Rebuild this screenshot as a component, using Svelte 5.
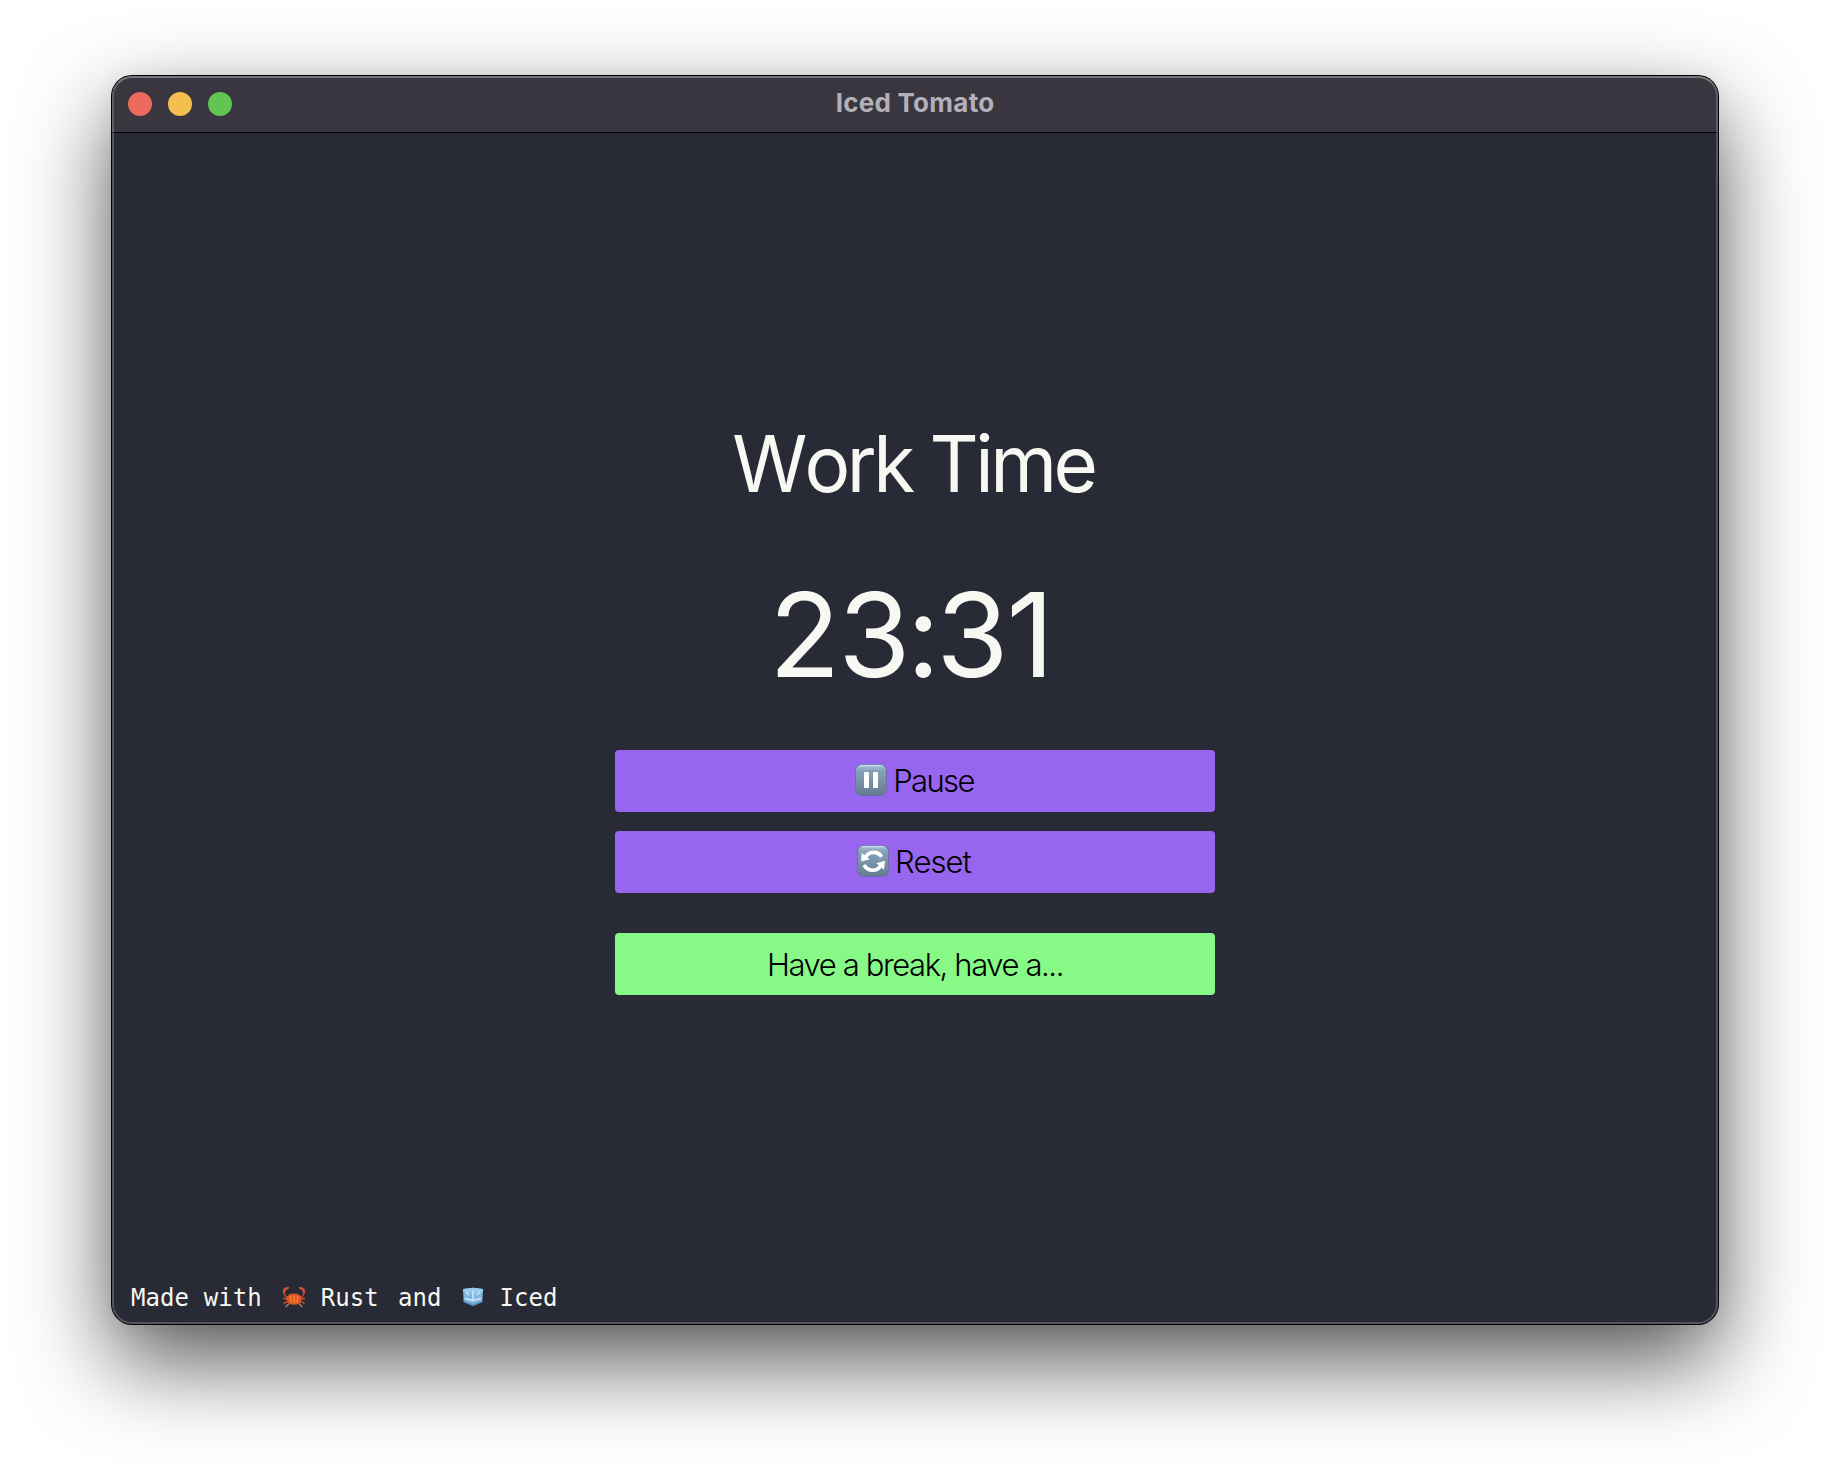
<script>
  const lights = ['red', 'yellow', 'green'];
</script>

<main>
  <section class="window">
    <header>
      <div class="lights">
        {#each lights as light}<span class="light {light}"></span>{/each}
      </div>
      <h1><span>Iced Tomato</span></h1>
    </header>
    <div class="content">
      <div class="mode"><span class="initial">W</span>ork Time</div>
      <div class="timer">23<span class="colon">:</span>31</div>
      <div class="actions">
        <button>
          <svg class="emoji" viewBox="0 0 32 32">
            <defs>
              <linearGradient id="tile" x1="0" y1="0" x2="0" y2="1">
                <stop offset="0" stop-color="#a9c3d9" />
                <stop offset="0.2" stop-color="#86a2ba" />
                <stop offset="1" stop-color="#657d93" />
              </linearGradient>
            </defs>
            <rect x="0.3" y="0.3" width="31.4" height="31.4" rx="6" fill="#5e738a" />
            <rect x="1" y="0.8" width="30" height="30" rx="5.5" fill="url(#tile)" />
            <path d="M5 1.6H27" stroke="#c6dcec" stroke-width="1.2" stroke-linecap="round" />
            <rect x="9" y="8" width="5" height="16" rx="1" fill="#fff" />
            <rect x="18" y="8" width="5" height="16" rx="1" fill="#fff" />
          </svg>
          <span class="pause">Pause</span>
        </button>
        <button>
          <svg class="emoji" viewBox="0 0 32 32">
            <rect x="0.3" y="0.3" width="31.4" height="31.4" rx="6" fill="#5e738a" />
            <rect x="1" y="0.8" width="30" height="30" rx="5.5" fill="url(#tile)" />
            <path d="M5 1.6H27" stroke="#c6dcec" stroke-width="1.2" stroke-linecap="round" />
            <path d="M8.500 12.200C12 6.200 20.500 5.600 24.600 11.700M7 20C11 26.800 20 27 23.800 20.500" fill="none" stroke="#fff" stroke-width="3.600" />
            <path d="M4.600 7.800 4.200 16.500 12.700 14.300ZM28 15.800 19.200 18.200 27 24.800Z" fill="#fff" />
          </svg>
          <span class="reset">Reset</span>
        </button>
        <button class="break"><span class="rest">Have a break, have a...</span></button>
      </div>
      <footer>
        <span>Made with</span>
        <svg class="crab" viewBox="0 0 24 22">
          <g fill="none" stroke="#c8482a" stroke-width="1.500" stroke-linecap="round">
            <path d="M6 11.500C3 11 2 9 2 5.500M18 11.500C21 11 22 9 22 5.500M5.500 13 1.500 12.500M6 15.500 2 17M18.500 13l4-.5M18 15.500l4 1.500" />
            <path d="M7 17.800 4 20.500M17 17.800 20 20.500" stroke="#a98260" />
          </g>
          <path d="M1.200 7.500C-.3 3.500 2 .6 7 1 7.500 2.800 6 3.200 4.500 3.500 3.800 5 3 7 1.200 7.500ZM22.800 7.500C24.300 3.500 22 .6 17 1 16.500 2.800 18 3.200 19.500 3.500 20.200 5 21 7 22.800 7.500Z" fill="#cf4e35" />
          <path d="M4.300 12.500Q5.500 7.500 12 7.500T19.700 12.500Q18.500 18.800 12 18.800T4.300 12.500Z" fill="#e2571f" />
          <path d="M8.300 10 9 16.500M12 9.500V17.500M15.700 10 15 16.500" stroke="#f88a3a" stroke-width="1.200" />
          <path d="M9.500 8.300V6.800M14.500 8.300V6.800" stroke="#71302a" stroke-width="1.300" />
        </svg>
        <span>Rust</span>
        <span class="and">and</span>
        <svg class="ice" viewBox="0 0 22 20">
          <path d="M1 2 11 .8 21 2 20.300 15 11 19 1.700 15Z" fill="#80b9df" />
          <path d="M1 2 11 .8 21 2 20.700 5 11 6 1.300 5Z" fill="#98cdea" />
          <path d="M11 4V13M3 11.500 11 13.500 19 11.500M4 5 7 8M18 5 14.500 8" fill="none" stroke="#cfe9f8" stroke-width="1.500" />
          <path d="M1.600 13.500 11 17 20.400 13.500V15L11 19 1.700 15Z" fill="#5593c5" />
        </svg>
        <span>Iced</span>
      </footer>
    </div>
  </section>
</main>

<style>
  :global(body) {
    background: #fff;
    overflow: hidden;
  }
  main {
    box-sizing: border-box;
    width: 1830px;
    height: 1472px;
    padding: 76px 112px 148px;
    font-family: Inter, 'Liberation Sans', sans-serif;
    overflow: hidden;
  }
  .window {
    position: relative;
    display: flex;
    flex-direction: column;
    height: 1248px;
    border-radius: 20px;
    background: #282a36;
    box-shadow: 0 0 0 1px #000, 0 37px 90px rgba(0, 0, 0, 0.67), 0 2px 24px rgba(0, 0, 0, 0.06);
  }
  .window::after {
    content: '';
    position: absolute;
    inset: 0;
    border: 2px solid rgba(255, 255, 255, 0.2);
    border-top-color: rgba(255, 255, 255, 0.32);
    border-radius: 20px;
    pointer-events: none;
  }
  header {
    box-sizing: border-box;
    display: grid;
    grid-template-columns: 200px 1fr 200px;
    align-items: center;
    height: 57px;
    border-bottom: 1px solid #000;
    border-radius: 20px 20px 0 0;
    background: #39363f;
  }
  .lights {
    display: flex;
    gap: 16px;
    padding-left: 16px;
  }
  .light {
    width: 24px;
    height: 24px;
    border-radius: 50%;
  }
  .red { background: #ed6a5e; }
  .yellow { background: #f5bf4f; }
  .green { background: #61c554; }
  h1 {
    margin: 0;
    padding-bottom: 2px;
    text-align: center;
    font-size: 26px;
    line-height: 30px;
    font-weight: 700;
    letter-spacing: 0.25px;
    color: #b3b0ba;
  }
  .content {
    flex: 1;
    display: flex;
    flex-direction: column;
    align-items: center;
    color: #f8f8f2;
  }
  .mode {
    margin-top: 283px;
    padding-right: 3px;
    font-size: 78.5px;
    line-height: 96px;
    letter-spacing: -3.6px;
    white-space: nowrap;
    transform: scaleX(0.972);
  }
  .initial { letter-spacing: -3px; }
  .timer {
    margin-top: 53px;
    padding-right: 9px;
    font-size: 117px;
    line-height: 140px;
    letter-spacing: -2px;
    font-feature-settings: 'calt' 0;
  }
  .colon { margin: 0 -2px; }
  .actions {
    display: flex;
    flex-direction: column;
    gap: 19px;
    width: 600px;
    margin-top: 45px;
  }
  button {
    display: flex;
    align-items: center;
    justify-content: center;
    gap: 6px;
    height: 62px;
    padding: 0;
    border: 0;
    border-radius: 4px;
    background: #9866ee;
    color: #000;
    font: 350 31px/38px Inter, 'Liberation Sans', sans-serif;
    letter-spacing: -1px;
  }
  .pause { padding-right: 1px; letter-spacing: -1.6px; }
  .reset { padding-right: 2px; letter-spacing: -0.9px; }
  .break {
    padding-top: 2px;
    margin-top: 21px;
    background: #87f987;
    letter-spacing: -1.4px;
  }
  .emoji {
    width: 32px;
    height: 32px;
    margin-bottom: 2px;
  }
  footer {
    box-sizing: border-box;
    display: flex;
    align-items: center;
    width: 100%;
    height: 28px;
    margin-top: auto;
    margin-bottom: 12px;
    padding-left: 19px;
    font: 24px/28px 'DejaVu Sans Mono', monospace;
    letter-spacing: 0.08px;
  }
  .crab {
    width: 24px;
    height: 22px;
    margin: 0 15px 2px 20px;
  }
  .and { margin-left: 19px; }
  .ice {
    width: 22px;
    height: 20px;
    margin: 0 15px 2px 21px;
  }
</style>
